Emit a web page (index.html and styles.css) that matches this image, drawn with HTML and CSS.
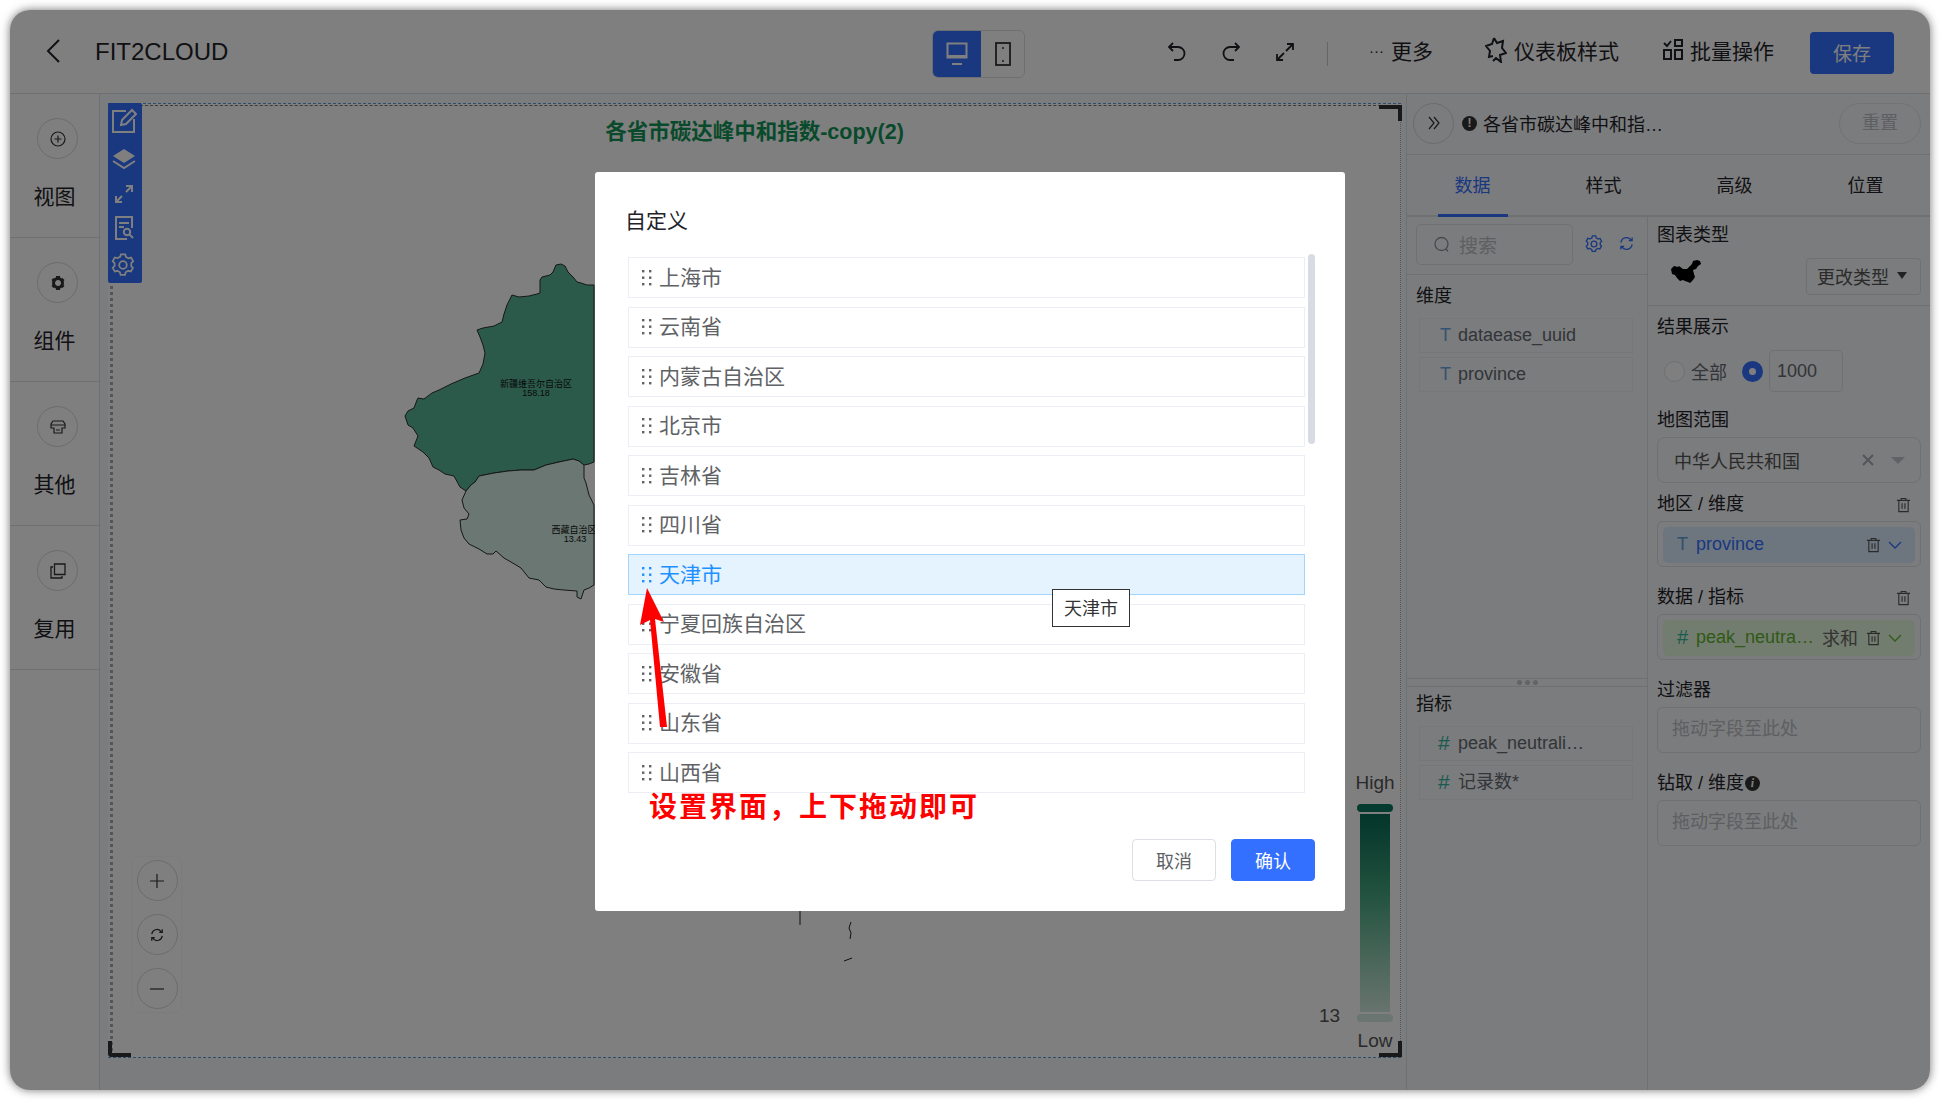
FILE: index.html
```html
<!DOCTYPE html>
<html lang="zh-CN">
<head>
    <meta charset="UTF-8">
    <title>FIT2CLOUD</title>
    <link rel="stylesheet" href="styles.css">
</head>
<body>
<svg class="defs" width="0" height="0">
    <symbol id="grip" viewBox="0 0 10 16"><g fill="currentColor"><rect x="0" y="0" width="2.4" height="2.4"/><rect x="7" y="0" width="2.4" height="2.4"/><rect x="0" y="6.5" width="2.4" height="2.4"/><rect x="7" y="6.5" width="2.4" height="2.4"/><rect x="0" y="13" width="2.4" height="2.4"/><rect x="7" y="13" width="2.4" height="2.4"/></g></symbol>
    <symbol id="trash" viewBox="0 0 16 16"><path d="M1 3h14M5.500 3V1h5v2M3 3v12h10V3M6.500 6v6M9.500 6v6" fill="none" stroke="currentColor" stroke-width="1.2"/></symbol>
    <symbol id="chev" viewBox="0 0 14 8"><path d="M1 1l6 6 6-6" fill="none" stroke="currentColor" stroke-width="1.3"/></symbol>
    <symbol id="sync" viewBox="0 0 16 16"><path d="M2 7a6 6 0 0 1 10.500-3.200L14 5M14 9a6 6 0 0 1-10.500 3.200L2 11M14 1.500V5h-3.500M2 14.500V11h3.500" fill="none" stroke="currentColor" stroke-width="1.4"/></symbol>
    <symbol id="gear" viewBox="0 0 24 24"><path d="M9.500 2h5l.8 3 2.800 1.600 3-.8 2.400 4.300-2.200 2.100v3.200l1.900 2-2.400 4.200-3-.8-2.800 1.600-.8 3h-5l-.8-3-2.800-1.600-3 .8L.2 17.400l2.200-2.200v-3.200L.2 9.900l2.400-4.300 3 .8L8.700 5z" transform="translate(1.500 -.5) scale(.88)" fill="none" stroke="currentColor" stroke-width="2"/><circle cx="12" cy="12" r="3.800" fill="none" stroke="currentColor" stroke-width="1.800"/></symbol>
</svg>

<div class="window">
    <header class="topbar">
        <svg class="back" viewBox="0 0 14 24"><path d="M13 1L2 12l11 11" fill="none" stroke="#1f2329" stroke-width="2"/></svg>
        <span class="app-name">FIT2CLOUD</span>
        <div class="device-switch">
            <span class="device on">
                <svg width="22" height="24" viewBox="0 0 22 24"><path d="M1.500 1.500h19v14h-19zM6 22h10" fill="none" stroke="#fff" stroke-width="2"/><path d="M1 13h20v3H1z" fill="#fff"/></svg>
            </span>
            <span class="device">
                <svg width="16" height="24" viewBox="0 0 16 24"><rect x="1" y="1" width="14" height="22" fill="none" stroke="#333" stroke-width="1.800"/><circle cx="8" cy="6" r="1" fill="#333"/><circle cx="8" cy="19" r="1" fill="#333"/></svg>
            </span>
        </div>
        <svg class="act-icon undo" viewBox="0 0 20 20"><path d="M6 1L2 5l4 4M2 5h9a6.500 6.500 0 0 1 0 13H7" fill="none" stroke="#1f2329" stroke-width="1.800"/></svg>
        <svg class="act-icon redo" viewBox="0 0 20 20"><path d="M14 1l4 4-4 4M18 5H9a6.500 6.500 0 0 0 0 13h4" fill="none" stroke="#1f2329" stroke-width="1.800"/></svg>
        <svg class="act-icon expand" viewBox="0 0 20 20"><path d="M12 2h6v6M18 2l-7 7M8 18H2v-6M2 18l7-7" fill="none" stroke="#1f2329" stroke-width="1.800"/></svg>
        <span class="top-split"></span>
        <span class="top-link more"><b class="dots">···</b>更多</span>
        <span class="top-link style">
            <svg width="22" height="26" viewBox="0 0 22 26"><path d="M9 1l3 5 6-2-1 7 4 5-6 2 1 7-5-4-3 3M9 1L7 7 1 9l4 5-1 6 4-1" fill="none" stroke="#1f2329" stroke-width="2"/></svg>
            仪表板样式
        </span>
        <span class="top-link batch">
            <svg width="20" height="22" viewBox="0 0 20 22"><g fill="none" stroke="#1f2329" stroke-width="2"><rect x="1" y="11" width="7" height="9"/><rect x="12" y="11" width="7" height="9"/><rect x="12" y="1" width="7" height="6"/><path d="M1 4l3 3 4-5"/></g></svg>
            批量操作
        </span>
        <button class="save">保存</button>
    </header>

    <div class="workspace">
        <aside class="sidebar">
            <div class="side-item">
                <span class="side-icon"><svg width="16" height="16" viewBox="0 0 16 16"><circle cx="8" cy="8" r="7" fill="none" stroke="#333" stroke-width="1.200"/><path d="M8 4.500v7M4.500 8h7" stroke="#333" stroke-width="1.200"/></svg></span>
                <span>视图</span>
            </div>
            <div class="side-item">
                <span class="side-icon"><svg width="16" height="16" viewBox="0 0 16 16"><circle cx="8" cy="8" r="4.500" fill="none" stroke="#333" stroke-width="3"/><path d="M6 1h4v3H6zM6 12h4v3H6zM1.500 5l2-2 2.500 2.500-2 2zM10 10.500l2-2 2.500 2.500-2 2zM12.500 3l2 2L12 7.500l-2-2zM3.500 13l-2-2L4 8.500l2 2z" fill="#333"/></svg></span>
                <span>组件</span>
            </div>
            <div class="side-item">
                <span class="side-icon"><svg width="16" height="14" viewBox="0 0 16 14"><path d="M3 1h10l2 3v4h-3v5H4V8H1V4zM1 5h14M6 10h4" fill="none" stroke="#333" stroke-width="1.200"/></svg></span>
                <span>其他</span>
            </div>
            <div class="side-item">
                <span class="side-icon"><svg width="16" height="16" viewBox="0 0 16 16"><path d="M4.500 1h10.500v10.500H4.500zM3 4H1v11h11v-2" fill="none" stroke="#333" stroke-width="1.300"/></svg></span>
                <span>复用</span>
            </div>
        </aside>

        <main class="stage">
            <div class="chart">
                <svg class="map" viewBox="109 104 1291 953" width="1291" height="953">
                    <path fill="#56b496" stroke="#2a2f2d" stroke-width="1" d="M557 265L562 264 566 266 569 272 574 277 578 282 582 283 588 285 595 285L595 462 590 464 585 465 580 461 574 459 560 462 547 465 535 470 522 470 509 471 495 473 480 476 476 482 472 485 467 491 461 487 455 476 446 474 440 470 434 467 430 458 424 452 418 448 415 446 419 436 414 428 409 425 406 416 409 411 415 408 418 400 419 398 425 399 433 393 440 390 452 384 466 378 480 373 484 364 486 353 484 345 481 337 478 330 484 328 495 326 503 322 505 314 508 305 513 295 520 297 530 296 538 294 541 293 541 280 543 277 551 275 554 272z"/>
                    <path fill="#d4eee4" stroke="#2a2f2d" stroke-width="1" d="M467 491L472 485 476 482 480 476 495 473 509 471 522 470 535 470 547 465 560 462 574 459 580 461 585 465 585 478 587 483 590 495 595 505L595 585 590 588 585 590 582 599 578 597 578 591 565 590 555 589 547 587 540 580 530 578 522 568 512 562 505 558 497 551 494 554 488 554 480 549 470 544 465 538 462 530 461 520 468 519 470 514 465 508 463 500z"/>
                    <text class="map-label" x="537" y="387">新疆维吾尔自治区</text>
                    <text class="map-label" x="537" y="396">158.18</text>
                    <text class="map-label" x="575" y="533">西藏自治区</text>
                    <text class="map-label" x="576" y="542">13.43</text>
                    <path fill="none" stroke="#222" stroke-width="1" d="M801 911v14M852 922l-2 6 2 5-1 6M853 958l-8 3"/>
                </svg>
                <div class="inner-frame"></div>
                <i class="corner tr"></i><i class="corner bl"></i><i class="corner br"></i>

                <h2 class="chart-title">各省市碳达峰中和指数-copy(2)</h2>

                <div class="chart-tools">
                    <svg width="26" height="26" viewBox="0 0 26 26"><path d="M15 3H2v21h21V11M10 17l1-5L21 2l4 4-10 10z" fill="none" stroke="#fff" stroke-width="2"/></svg>
                    <svg width="24" height="24" viewBox="0 0 24 24"><path d="M12 2l11 7-11 7L1 9z" fill="#fff"/><path d="M1 14l11 7 11-7" fill="none" stroke="#fff" stroke-width="2"/></svg>
                    <svg width="20" height="20" viewBox="0 0 20 20"><path d="M12 2h6v6M18 2l-6 6M8 18H2v-6M2 18l6-6" fill="none" stroke="#fff" stroke-width="2"/></svg>
                    <svg width="20" height="24" viewBox="0 0 20 24"><path d="M13 23H2V1h16v11M5 7h10M5 11h5" fill="none" stroke="#fff" stroke-width="2"/><circle cx="13" cy="16" r="3.200" fill="none" stroke="#fff" stroke-width="2"/><path d="M15 18l4 4" stroke="#fff" stroke-width="2"/></svg>
                    <svg class="tool-gear" width="24" height="24"><use href="#gear"/></svg>
                </div>

                <div class="zoom-tools">
                    <span class="zoom-btn"><svg width="16" height="16" viewBox="0 0 16 16"><path d="M8 1v14M1 8h14" stroke="#333" stroke-width="1.200"/></svg></span>
                    <span class="zoom-btn"><svg width="14" height="14"><use href="#sync"/></svg></span>
                    <span class="zoom-btn"><svg width="16" height="16" viewBox="0 0 16 16"><path d="M1 8h14" stroke="#333" stroke-width="1.200"/></svg></span>
                </div>

                <div class="legend">
                    <span>High</span>
                    <i class="handle top"></i>
                    <i class="ramp"></i>
                    <i class="handle low"></i>
                    <span class="low-text">Low</span>
                    <span class="min-val">13</span>
                </div>
            </div>
        </main>

        <section class="panel">
            <div class="panel-head">
                <span class="collapse"><svg width="12" height="14" viewBox="0 0 12 14"><path d="M1 1l5 6-5 6M6 1l5 6-5 6" fill="none" stroke="#333" stroke-width="1.200"/></svg></span>
                <span class="warn">!</span>
                <span class="panel-title">各省市碳达峰中和指…</span>
                <span class="reset">重置</span>
            </div>
            <div class="tabs">
                <span class="tab active">数据</span>
                <span class="tab">样式</span>
                <span class="tab">高级</span>
                <span class="tab">位置</span>
            </div>
            <div class="panel-body">
                <div class="fields">
                    <div class="search-row">
                        <div class="search">
                            <svg width="16" height="17" viewBox="0 0 16 17"><circle cx="7.500" cy="8" r="6.500" fill="none" stroke="#8f959e" stroke-width="1.300"/><path d="M12 13l2 2.500" stroke="#8f959e" stroke-width="1.300"/></svg>
                            <span>搜索</span>
                        </div>
                        <svg class="blue-icon gear" width="18" height="18"><use href="#gear"/></svg>
                        <svg class="blue-icon" width="15" height="15"><use href="#sync"/></svg>
                    </div>
                    <div class="upper">
                        <div class="col-title">维度</div>
                        <div class="field first"><em>T</em>dataease_uuid</div>
                        <div class="field"><em>T</em>province</div>
                    </div>
                    <div class="splitter"><i></i><i></i><i></i></div>
                    <div class="col-title after-split">指标</div>
                    <div class="field first measure"><em class="hash">#</em>peak_neutrali…</div>
                    <div class="field measure"><em class="hash">#</em>记录数*</div>
                </div>

                <div class="props">
                    <div class="type-block">
                        <div class="label top">图表类型</div>
                        <div class="type-row">
                            <svg class="china" width="30" height="24" viewBox="0 0 30 24"><path d="M0 9l3-3 4 1 1-1 4 3 4 0 2-2 3-3 1-3 4-1 3 1 1 3-3 2-2 3-3 1 1 4 1 3-2 3-3 3-2-1-3-1-2-1-3 1-3-3-2-3-3-1z" fill="#000"/></svg>
                            <span class="change-type">更改类型<i class="tri"></i></span>
                        </div>
                    </div>
                    <div class="label first">结果展示</div>
                    <div class="radio-row">
                        <i class="radio"></i><span class="radio-text">全部</span>
                        <i class="radio on"></i><span class="num-input">1000</span>
                    </div>
                    <div class="label range">地图范围</div>
                    <div class="select">
                        <span>中华人民共和国</span>
                        <svg width="12" height="12" viewBox="0 0 12 12"><path d="M1 1l10 10M11 1L1 11" stroke="#a8abb2" stroke-width="2"/></svg>
                        <i class="tri pale"></i>
                    </div>
                    <div class="label tight">地区 / 维度<svg class="trash" width="15" height="16"><use href="#trash"/></svg></div>
                    <div class="drop">
                        <div class="pill blue"><em>T</em><span class="pill-name">province</span>
                            <svg class="pill-trash" width="15" height="16"><use href="#trash"/></svg>
                            <svg class="pill-chev" width="14" height="8"><use href="#chev"/></svg>
                        </div>
                    </div>
                    <div class="label">数据 / 指标<svg class="trash" width="15" height="16"><use href="#trash"/></svg></div>
                    <div class="drop">
                        <div class="pill green"><em>#</em><span class="pill-name">peak_neutra…</span><span class="agg">求和</span>
                            <svg class="pill-trash" width="15" height="16"><use href="#trash"/></svg>
                            <svg class="pill-chev" width="14" height="8"><use href="#chev"/></svg>
                        </div>
                    </div>
                    <div class="label">过滤器</div>
                    <div class="drop empty">拖动字段至此处</div>
                    <div class="label">钻取 / 维度<span class="info">i</span></div>
                    <div class="drop empty">拖动字段至此处</div>
                </div>
            </div>
        </section>
    </div>

    <div class="mask"></div>

    <div class="dialog">
        <div class="dialog-title">自定义</div>
        <ul class="sort-list">
            <li><svg width="10" height="16"><use href="#grip"/></svg>上海市</li>
            <li><svg width="10" height="16"><use href="#grip"/></svg>云南省</li>
            <li><svg width="10" height="16"><use href="#grip"/></svg>内蒙古自治区</li>
            <li><svg width="10" height="16"><use href="#grip"/></svg>北京市</li>
            <li><svg width="10" height="16"><use href="#grip"/></svg>吉林省</li>
            <li><svg width="10" height="16"><use href="#grip"/></svg>四川省</li>
            <li class="dragging"><svg width="10" height="16"><use href="#grip"/></svg>天津市</li>
            <li><svg width="10" height="16"><use href="#grip"/></svg>宁夏回族自治区</li>
            <li><svg width="10" height="16"><use href="#grip"/></svg>安徽省</li>
            <li><svg width="10" height="16"><use href="#grip"/></svg>山东省</li>
            <li><svg width="10" height="16"><use href="#grip"/></svg>山西省</li>
        </ul>
        <div class="note">设置界面，上下拖动即可</div>
        <div class="dialog-foot">
            <button class="btn">取消</button>
            <button class="btn primary">确认</button>
        </div>
        <i class="thumb"></i>
        <span class="drag-tip">天津市</span>
        <svg class="arrow" width="40" height="145" viewBox="0 0 40 145"><path d="M7 0l17 34-9-3 12 108h-7L10 32 0 37z" fill="#f00"/></svg>
    </div>
</div>
</body>
</html>
```

FILE: styles.css
```css
* {
    box-sizing: border-box;
}

html, body {
    margin: 0;
    height: 100%;
    background: #fff;
}

body {
    padding: 10px;
    font-family: "Liberation Sans", "Noto Sans CJK SC", sans-serif;
    color: #1f2329;
    overflow: hidden;
}

.defs {
    position: absolute;
}

em, i {
    font-style: normal;
}

.window {
    position: relative;
    width: 1920px;
    height: 1080px;
    display: flex;
    flex-direction: column;
    background: #fff;
    border-radius: 20px;
    overflow: hidden;
    box-shadow: 0 0 10px rgba(0, 0, 0, 0.55);
}

.mask {
    position: absolute;
    inset: 0;
    background: rgba(0, 0, 0, 0.5);
}

/* top bar */
.topbar {
    height: 84px;
    flex: none;
    display: flex;
    align-items: center;
    padding: 4px 0 0 36px;
    border-bottom: 1px solid #dee0e3;
}

.back {
    width: 14px;
    height: 24px;
    margin-top: -6px;
}

.app-name {
    width: 837px;
    margin: -4px 0 0 35px;
    font-size: 24px;
}

.device-switch {
    width: 93px;
    height: 48px;
    display: flex;
    border: 1px solid #dcdfe6;
    border-radius: 6px;
    overflow: hidden;
}

.device {
    flex: 1;
    display: flex;
    align-items: center;
    justify-content: center;
}

.device.on {
    flex: none;
    width: 48px;
    background: #3370ff;
}

.act-icon {
    width: 20px;
    height: 20px;
    margin-top: -3px;
}

.undo { margin-left: 142px; }
.redo { margin-left: 34px; }
.expand { margin-left: 34px; }

.top-split {
    width: 1px;
    height: 24px;
    margin: 0 0 0 32px;
    background: #c9ccd1;
}

.top-link {
    display: flex;
    align-items: center;
    gap: 7px;
    font-size: 21px;
    margin-top: -7px;
}

.more { margin-left: 41px; }
.style { margin-left: 52px; }
.batch { margin-left: 44px; }

.dots {
    font-weight: 400;
    font-size: 15px;
    letter-spacing: 0;
}

.save {
    width: 84px;
    height: 42px;
    margin: -2px 0 0 36px;
    border: 0;
    border-radius: 4px;
    background: #3370ff;
    color: #fff;
    font: inherit;
    font-size: 19px;
}

/* body */
.workspace {
    flex: 1;
    display: flex;
    min-height: 0;
}

.sidebar {
    width: 90px;
    flex: none;
    border-right: 1px solid #dee0e3;
}

.side-item {
    height: 144px;
    display: flex;
    flex-direction: column;
    align-items: center;
    padding-top: 24px;
    font-size: 21px;
    line-height: 28px;
    border-bottom: 1px solid #dee0e3;
}

.side-icon {
    width: 41px;
    height: 41px;
    margin: 0 0 24px 6px;
    display: flex;
    align-items: center;
    justify-content: center;
    border: 1px solid #d5d7da;
    border-radius: 50%;
}

.stage {
    flex: 1;
    padding: 9px 5px 32px 8px;
    background: #f7f8fa;
    border-right: 1px solid #dee0e3;
}

.chart {
    position: relative;
    width: 1293px;
    height: 955px;
    background: #fff;
    border-top: 1px dashed #5a9bd5;
    border-bottom: 1px dashed #5a9bd5;
}

.map {
    position: absolute;
    left: 0;
    top: 0;
}

.map-label {
    font-size: 9px;
    fill: #111;
    text-anchor: middle;
}

.inner-frame {
    position: absolute;
    inset: 1px 0 0 2px;
    border-top: 1px dashed #777;
    border-left: 3px dotted #aaa;
    border-right: 1px dotted #aaa;
}

.corner {
    position: absolute;
    width: 23px;
    height: 16px;
}

.corner.tr {
    right: -1px;
    top: 1px;
    border-top: 4px solid #333;
    border-right: 4px solid #333;
}

.corner.bl {
    left: 0;
    bottom: 0;
    border-bottom: 4px solid #333;
    border-left: 4px solid #333;
    border-bottom-left-radius: 4px;
}

.corner.br {
    right: -1px;
    bottom: 0;
    border-bottom: 4px solid #333;
    border-right: 4px solid #333;
}

.chart-title {
    position: relative;
    margin: 15px 0 0;
    text-align: center;
    font-size: 21.5px;
    line-height: 26px;
    font-weight: 700;
    color: #149458;
}

.chart-tools {
    position: absolute;
    left: 0;
    top: -1px;
    width: 34px;
    height: 180px;
    display: flex;
    flex-direction: column;
    align-items: center;
    justify-content: space-between;
    padding: 5px 2px 6px 0;
    background: #3370ff;
    border-radius: 2px;
}

.tool-gear {
    color: #fff;
    margin-left: -3px;
}

.zoom-tools {
    position: absolute;
    left: 25px;
    top: 753px;
    width: 48px;
    height: 155px;
    display: flex;
    flex-direction: column;
    align-items: center;
    gap: 13px;
    padding-top: 3px;
    background: #fff;
    border-radius: 5px;
    box-shadow: 0 0 4px rgba(0, 0, 0, 0.06);
    color: #333;
}

.zoom-btn {
    width: 41px;
    height: 41px;
    flex: none;
    display: flex;
    align-items: center;
    justify-content: center;
    border: 1px solid #d5d7da;
    border-radius: 50%;
}

.legend {
    position: absolute;
    left: 1249px;
    top: 668px;
    width: 36px;
    display: flex;
    flex-direction: column;
    align-items: center;
    font-size: 19px;
    line-height: 22px;
    color: #555;
}

.handle {
    width: 36px;
    height: 8px;
    border-radius: 4px;
    flex: none;
}

.handle.top {
    margin-top: 10px;
    background: #0a745e;
}

.handle.low {
    background: #d4eae2;
}

.ramp {
    width: 30px;
    height: 198px;
    margin: 2px 0;
    background: linear-gradient(#066a54, #44a57e 40%, #8cc9ad 70%, #d0e8de);
}

.low-text {
    margin-top: 8px;
}

.min-val {
    position: absolute;
    left: -38px;
    top: 233px;
}

/* right panel */
.panel {
    width: 524px;
    flex: none;
    display: flex;
    flex-direction: column;
    background: #f7f8fa;
    font-size: 18px;
}

.panel-head {
    height: 61px;
    display: flex;
    align-items: center;
    padding: 0 10px 2px 6px;
    border-bottom: 1px solid #dee0e3;
}

.collapse {
    width: 41px;
    height: 41px;
    display: flex;
    align-items: center;
    justify-content: center;
    border: 1px solid #d5d7da;
    border-radius: 50%;
}

.warn {
    width: 15px;
    height: 15px;
    margin-left: 8px;
    border-radius: 50%;
    background: #333;
    color: #fff;
    font-size: 12px;
    font-weight: 700;
    line-height: 15px;
    text-align: center;
}

.panel-title {
    margin-left: 6px;
    font-size: 18px;
}

.reset {
    width: 82px;
    height: 41px;
    margin-left: auto;
    border: 1px solid #e2e4e8;
    border-radius: 21px;
    color: #bbbfc4;
    line-height: 38px;
    text-align: center;
}

.tabs {
    height: 62px;
    flex: none;
    display: flex;
    border-bottom: 2px solid #dee0e3;
}

.tab {
    position: relative;
    flex: 1;
    text-align: center;
    line-height: 63px;
}

.tab.active {
    color: #3370ff;
}

.tab.active::after {
    content: "";
    position: absolute;
    left: 31px;
    bottom: -2px;
    width: 70px;
    height: 3px;
    background: #3370ff;
}

.panel-body {
    flex: 1;
    display: flex;
    min-height: 0;
}

.fields {
    width: 241px;
    flex: none;
    border-right: 1px solid #dee0e3;
}

.search-row {
    height: 58px;
    display: flex;
    align-items: flex-start;
    padding: 7px 0 0 9px;
    border-bottom: 1px solid #dee0e3;
}

.search {
    width: 157px;
    height: 41px;
    display: flex;
    align-items: center;
    gap: 9px;
    padding-left: 17px;
    border: 1px solid #dee0e3;
    border-radius: 5px;
    font-size: 19px;
    color: #bbbfc4;
}

.blue-icon {
    color: #3370ff;
    margin: 12px 0 0 16px;
}

.blue-icon.gear {
    margin: 11px 0 0 12px;
}

.upper {
    height: 403px;
    padding-top: 9px;
}

.col-title {
    margin-left: 9px;
    line-height: 24px;
}

.after-split {
    margin-top: 5px;
}

.field {
    width: 214px;
    height: 35px;
    margin: 4px 0 0 12px;
    padding: 0 0 2px 20px;
    display: flex;
    align-items: center;
    border: 1px solid #eceef1;
    color: #646a73;
    line-height: 32px;
}

.field.first {
    margin-top: 10px;
}

.field.measure {
    padding-left: 18px;
}

.field em {
    width: 18px;
    flex: none;
    color: #6aa5e6;
}

.field em.hash {
    width: 20px;
    font-size: 21px;
    color: #36b5a0;
}

.splitter {
    height: 9px;
    display: flex;
    align-items: center;
    justify-content: center;
    gap: 3px;
    border-top: 1px solid #dee0e3;
    border-bottom: 1px solid #dee0e3;
}

.splitter i {
    width: 5px;
    height: 5px;
    border-radius: 50%;
    background: #c5c8cc;
}

.props {
    flex: 1;
    padding: 0 10px 0 9px;
}

.type-block {
    height: 89px;
    margin: 0 -10px 0 -9px;
    padding: 0 10px 0 9px;
    border-bottom: 1px solid #dee0e3;
}

.label {
    position: relative;
    margin-top: 18px;
    line-height: 24px;
    display: flex;
    align-items: center;
}

.label.top { margin-top: 0; padding-top: 6px; line-height: 24px; height: 30px; }
.label.first { margin-top: 9px; }
.label.range { margin-top: 16px; }
.label.tight { margin-top: 9px; }

.trash {
    position: absolute;
    right: 10px;
    top: 5px;
    color: #555;
}

.type-row {
    display: flex;
    justify-content: space-between;
    align-items: flex-start;
    margin-top: 11px;
}

.china {
    margin: 2px 0 0 14px;
}

.change-type {
    width: 115px;
    height: 37px;
    display: flex;
    align-items: center;
    justify-content: space-between;
    padding: 0 13px 2px 10px;
    border: 1px solid #dee0e3;
    border-radius: 4px;
    color: #555;
}

.tri {
    width: 0;
    height: 0;
    border-left: 5px solid transparent;
    border-right: 5px solid transparent;
    border-top: 7px solid #444;
}

.tri.pale {
    border-left-width: 7px;
    border-right-width: 7px;
    border-top-color: #c0c4cc;
    margin-left: 17px;
}

.radio-row {
    display: flex;
    align-items: center;
    margin-top: 11px;
    padding-left: 7px;
}

.radio {
    width: 21px;
    height: 21px;
    border: 1px solid #dcdfe6;
    border-radius: 50%;
    background: #fff;
}

.radio.on {
    border: 7px solid #3370ff;
    margin-left: 15px;
}

.radio-text {
    margin-left: 6px;
    color: #646a73;
}

.num-input {
    width: 74px;
    height: 42px;
    margin-left: 6px;
    padding-left: 7px;
    border: 1px solid #dee0e3;
    border-radius: 5px;
    color: #646a73;
    line-height: 40px;
}

.select {
    height: 46px;
    margin-top: 5px;
    display: flex;
    align-items: center;
    padding-left: 16px;
    border: 1px solid #dee0e3;
    border-radius: 8px;
    color: #555;
}

.select span {
    width: 188px;
}

.drop {
    height: 46px;
    margin-top: 5px;
    padding: 5px 5px 0;
    border: 1px solid #dee0e3;
    border-radius: 6px;
}

.drop.empty {
    padding: 0 0 0 14px;
    line-height: 42px;
    color: #bbbfc4;
}

.pill {
    position: relative;
    height: 36px;
    display: flex;
    align-items: center;
    border-radius: 5px;
    padding: 0 0 2px 14px;
}

.pill.blue {
    background: #daecff;
    color: #3370ff;
}

.pill.blue em {
    width: 19px;
    color: #5da0d8;
}

.pill.green {
    background: #e6fade;
    color: #5fb52f;
}

.pill.green em {
    width: 19px;
    font-size: 20px;
    color: #36b5a0;
}

.agg {
    position: absolute;
    left: 159px;
    color: #666;
}

.pill-trash {
    position: absolute;
    left: 203px;
    top: 10px;
    color: #555;
}

.pill-chev {
    position: absolute;
    left: 225px;
    top: 14px;
}

.info {
    width: 15px;
    height: 15px;
    margin-left: 1px;
    border-radius: 50%;
    background: #333;
    color: #fff;
    font-family: "Liberation Serif", serif;
    font-size: 12px;
    font-weight: 700;
    font-style: italic;
    line-height: 15px;
    text-align: center;
}

/* dialog */
.dialog {
    position: absolute;
    left: 585px;
    top: 162px;
    width: 750px;
    height: 739px;
    padding: 37px 0 0 30px;
    background: #fff;
    border-radius: 3px;
}

.dialog-title {
    font-size: 21px;
    line-height: 24px;
}

.sort-list {
    list-style: none;
    width: 677px;
    height: 536px;
    margin: 24px 0 0 3px;
    padding: 0;
    overflow: hidden;
}

.sort-list li {
    height: 41px;
    margin-bottom: 8.5px;
    display: flex;
    align-items: center;
    gap: 7px;
    padding: 0 0 4px 13px;
    border: 1px solid #ebeef5;
    font-size: 21px;
    color: #606266;
}

.sort-list li svg {
    margin-top: 4px;
}

.sort-list li.dragging {
    background: #e5f3ff;
    border-color: #a3d5ff;
    color: #1e90ff;
}

.note {
    margin: 1px 0 0 24px;
    height: 28px;
    font-size: 28px;
    line-height: 28px;
    font-weight: 700;
    letter-spacing: 2px;
    color: #f00;
}

.dialog-foot {
    display: flex;
    justify-content: flex-end;
    gap: 15px;
    margin-top: 17px;
    padding-right: 30px;
}

.btn {
    width: 84px;
    height: 42px;
    border: 1px solid #dcdfe6;
    border-radius: 4px;
    background: #fff;
    color: #606266;
    font: inherit;
    font-size: 18px;
}

.btn.primary {
    border-color: #3370ff;
    background: #3370ff;
    color: #fff;
}

.thumb {
    position: absolute;
    left: 713px;
    top: 82px;
    width: 7px;
    height: 190px;
    border-radius: 4px;
    background: #d8dbe4;
}

.drag-tip {
    position: absolute;
    left: 457px;
    top: 417px;
    width: 78px;
    height: 38px;
    padding-top: 1px;
    border: 1px solid #333;
    background: #fff;
    font-size: 18px;
    line-height: 37px;
    text-align: center;
    color: #333;
}

.arrow {
    position: absolute;
    left: 45px;
    top: 416px;
}
```
